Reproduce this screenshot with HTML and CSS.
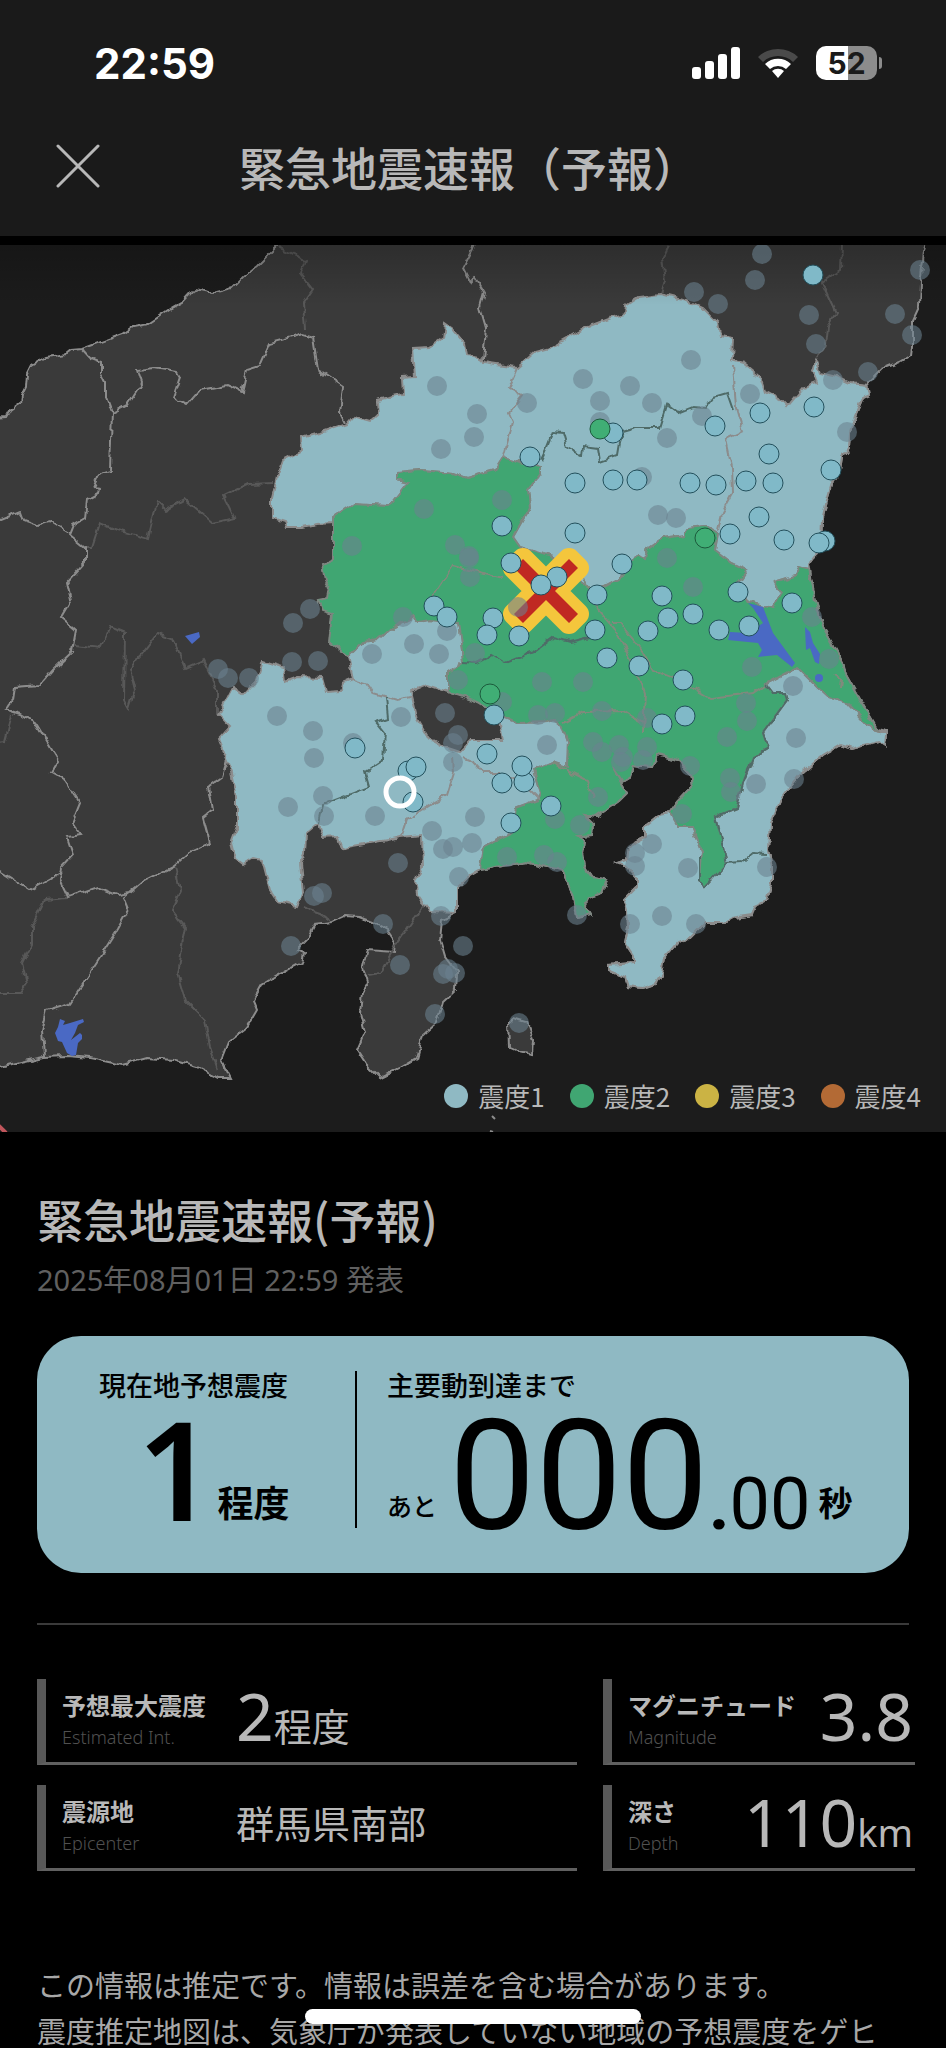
FILE: index.html
```html
<!DOCTYPE html>
<html lang="ja">
  <head>
    <meta charset="UTF-8" />
    <meta name="viewport" content="width=device-width, initial-scale=1" />
    <title>緊急地震速報（予報）</title>
    <link rel="stylesheet" href="styles.css">
  </head>

  <body>
    <div class="app">
      <div class="status-bar">
        <span class="time">22:59</span>
        <div class="status-icons">
          <svg class="signal" viewBox="0 0 48 32" aria-hidden="true">
            <rect x="0" y="20" width="9" height="12" rx="3" />
            <rect x="13" y="14" width="9" height="18" rx="3" />
            <rect x="26" y="7" width="9" height="25" rx="3" />
            <rect x="39" y="0" width="9" height="32" rx="3" />
          </svg>
          <svg class="wifi" viewBox="0 0 42 32" aria-hidden="true">
            <path class="wifi-off" d="M1 10A29 29 0 0 1 41 10L36 15A22 22 0 0 0 6 15Z" />
            <path d="M8 17A19 19 0 0 1 34 17L29 22A12 12 0 0 0 13 22Z" />
            <path d="M15 24A9 9 0 0 1 27 24L21 31Z" />
          </svg>
          <div class="battery"><span>52</span></div>
        </div>
      </div>

      <header class="header">
        <button class="close" aria-label="閉じる">
          <svg viewBox="0 0 44 44"><path d="M2 2L42 42M42 2L2 42" /></svg>
        </button>
        <h1>緊急地震速報（予報）</h1>
      </header>

      <div class="map">
        <svg class="map-svg" viewBox="0 245 946 887" role="img" aria-label="予想震度の地図">
          <defs>
            <!-- roughens the coast and the borders -->
            <filter id="rough" filterUnits="userSpaceOnUse" x="-20" y="225" width="986" height="927" color-interpolation-filters="sRGB">
              <feTurbulence type="fractalNoise" baseFrequency="0.12" numOctaves="1" seed="4" />
              <feDisplacementMap in="SourceGraphic" scale="8" xChannelSelector="R" yChannelSelector="G" />
            </filter>
            <linearGradient id="shade" x1="0" y1="0" x2="0" y2="1">
              <stop offset="0" stop-color="#000" stop-opacity=".22" />
              <stop offset="1" stop-color="#000" stop-opacity="0" />
            </linearGradient>
          </defs>

          <g filter="url(#rough)">
            <path class="land" d="M-10 418L6 417 10 410 21 402 22 395 26 387 27 374 31 366 46 357 66 354 71 350 82 349 123 334 133 327 148 324 160 316 172 308 183 302 195 289 213 293 232 288 243 277 258 265 278 245 285 235 926 235 925 245 920 283 919 307 913 320 913 347 912 355 900 362 880 370 868 382 870 395 863 398 855 417 850 433 849 448 842 457 840 470 832 483 827 500 823 517 822 550 815 555 809 563 812 583 815 602 823 627 832 643 843 663 845 673 860 700 878 730 887 732 886 747 878 742 852 749 840 745 823 755 800 775 780 800 770 823 768 850 772 867 772 883 767 900 755 905 752 915 732 918 723 923 705 923 688 940 677 943 665 957 662 973 655 984 643 988 628 986 625 977 608 970 608 965 633 963 633 955 625 943 628 927 627 910 624 900 637 887 637 878 627 867 617 863 626 860 628 847 645 838 645 827 660 815 670 813 678 802 692 787 690 773 678 760 657 755 652 767 633 765 630 777 622 782 612 767 627 793 617 803 597 817 585 815 593 823 592 835 578 836 585 840 583 853 585 867 593 877 607 880 602 893 587 898 585 905 591 915 577 917 573 897 567 880 562 870 547 867 527 862 507 865 480 870 468 877 457 888 457 913 442 920 440 940 445 957 457 973 456 990 443 1002 437 1023 423 1035 417 1058 400 1068 380 1078 367 1065 357 1050 365 1032 360 1013 362 993 368 983 363 967 367 950 395 952 396 943 387 930 373 922 360 917 345 916 332 922 315 924 307 940 297 950 304 953 302 962 277 975 262 984 253 1000 257 1010 247 1027 228 1042 221 1060 230 1078 218 1078 197 1067 173 1060 147 1058 122 1065 90 1058 67 1056 43 1057 -10 1069Z" />
            <path class="land" d="M508 1022L513 1018 527 1022 533 1040 532 1055 520 1052 509 1047Z" />
            <path class="faint" d="M278 247L305 260 300 273 313 290 304 303 306 330M85 548L92 548 100 523 117 530 148 539 157 502 165 510 185 499 213 523 234 518 223 496 248 484 273 483M75 645L100 648 110 627 125 633 124 700 129 709 135 690 130 670 158 633 172 638 185 668 203 660 217 690 217 715M175 867L180 890 172 910 185 927 177 973 185 1000 205 1020 210 1047 218 1070M68 898L45 900 32 927 32 943 22 963 27 983 20 993 0 993M302 907L320 913 330 920M425 903L397 943 380 973 368 975M669 245L662 260 665 280 661 294M842 245L841 270 822 283 836 313 827 327 825 347 816 360M12 715L5 742 -5 743" />
            <path class="border" d="M82 349L90 358 101 362 101 373 106 383 106 397 112 413 111 440 110 470 100 473 94 487 99 488 98 494 87 500 85 518 73 525 69 535 85 548 85 563 67 583 71 600 61 617 76 630 72 652 53 670 40 685 15 687 13 700 5 710 20 715 37 725 58 760 51 772 65 780 80 803 72 823 81 835 67 837 73 855 62 867 60 880 68 897 97 887 117 895 130 893 143 882 173 867 190 852 210 843 203 817 212 810 208 787 222 777 227 760M112 413L128 405 142 383 138 370 153 368 177 372 180 377 173 397 187 405 200 390 227 385 242 392 247 370 260 366 270 343 303 334 313 337 318 370 343 387 340 413 345 423M-5 522L20 512 23 520 37 525 50 521 69 533M-5 868L30 890 63 871M130 893L123 898 128 910 117 930 98 960 87 977 70 1003 47 1010 42 1030 44 1057M475 245L463 268 470 282 475 277 484 292 480 307 486 328 483 360" />

            <path class="level1" d="M445 324L452 329 465 345 467 355 480 357 483 363 517 368 535 352 550 348 568 338 587 327 613 317 625 314 626 305 638 297 660 294 687 301 703 308 718 323 720 335 733 337 732 360 743 363 760 377 765 392 780 400 787 407 803 388 817 383 812 370 815 360 820 373 837 377 850 383 868 385 870 395 863 398 855 417 850 433 849 448 842 457 840 470 832 483 827 500 823 517 822 550 815 555 809 563 809 570 798 567 795 576 775 582 782 593 773 608 760 605 748 602 738 583 747 570 732 563 715 550 718 533 705 526 688 528 685 535 663 538 648 548 645 558 637 555 622 577 603 587 590 590 553 557 520 547 513 537 530 507 528 490 541 473 541 467 520 463 503 458 495 470 467 478 453 473 420 470 397 472 397 480 408 483 393 502 387 506 353 504 333 517 333 523 317 524 303 527 287 527 285 522 272 518 272 497 277 477 283 460 303 450 302 438 320 433 347 424 353 417 370 422 378 415 377 400 403 394 402 377 415 376 413 348 430 347 443 338Z" />
            <path class="level1" d="M263 661L283 667 285 682 298 677 322 678 326 692 341 691 343 683 353 679 348 656 362 642 378 640 393 627 413 617 418 622 430 620 458 623 462 650 463 663 448 673 448 692 427 685 410 692 417 720 427 737 445 747 460 752 472 740 503 740 498 715 517 723 548 722 553 720 563 728 568 742 567 767 552 762 533 770 540 793 537 800 515 808 512 833 483 847 480 870 468 877 457 888 457 913 430 912 417 893 415 880 423 867 422 835 400 837 387 840 342 848 338 837 323 838 318 823 306 833 305 853 300 863 303 893 297 906 278 902 270 890 262 860 253 858 243 864 235 858 231 843 237 827 237 797 232 773 218 740 230 727 218 715 232 688 243 695 257 680Z" />
            <path class="level1" d="M797 667L817 687 828 697 847 703 867 725 878 732 887 732 886 747 878 742 852 749 840 745 823 755 800 775 780 800 770 823 768 850 772 867 772 883 767 900 755 905 752 915 732 918 723 923 705 923 688 940 677 943 665 957 662 973 655 984 643 988 628 986 625 977 608 970 608 965 633 963 633 955 625 943 628 927 627 910 624 900 637 887 637 878 627 867 617 863 626 860 628 847 645 838 645 827 660 815 670 813 678 827 692 827 702 852 700 880 705 887 727 863 715 817 737 808 743 783 753 757 768 748 763 733 787 700 785 693 772 693 765 684Z" />
            <path class="level2" d="M503 458L520 463 541 467 541 473 528 490 530 507 513 537 520 547 553 557 590 590 603 587 622 577 637 555 645 558 648 548 663 538 685 535 688 528 705 526 718 533 715 550 732 563 747 570 738 583 748 602 760 605 773 608 782 593 775 582 795 576 798 567 809 570 812 583 815 602 823 627 832 643 843 663 845 673 860 700 878 731 867 725 847 703 828 697 817 687 797 667 765 684 772 693 785 693 787 700 763 733 768 748 753 757 743 783 737 808 715 817 727 863 705 887 700 880 702 852 692 827 678 827 670 813 678 802 692 787 690 773 678 760 657 755 652 767 633 765 630 777 622 782 612 767 627 793 617 803 597 817 585 815 593 823 592 835 578 836 585 840 583 853 585 867 593 877 607 880 602 893 587 898 585 905 591 915 577 917 573 897 567 880 562 870 547 867 527 862 507 865 480 870 483 847 512 833 515 808 537 800 540 793 533 770 552 762 567 767 568 742 563 728 553 720 548 722 517 723 500 715 478 702 448 692 448 673 463 663 462 650 458 623 430 620 418 622 413 617 393 627 378 640 362 642 348 656 329 642 332 613 322 610 318 600 328 598 330 588 325 580 322 565 333 560 333 517 353 504 387 506 393 502 408 483 397 480 397 472 420 470 453 473 467 478 495 470Z" />

            <path class="border" d="M517 368L509 387 522 395 509 413 513 422 503 458M733 365L736 407 743 431 726 439 732 467 733 493 722 513 718 530M353 680L368 685 373 693 397 700 410 697M453 757L454 773 447 795 433 803 407 820 402 835M463 758L473 762 483 773 500 773 527 787 540 800" />
            <path class="inner" d="M541 460L547 447 553 432 563 433 567 447 582 455 583 447 598 449 600 461 617 455 619 443 623 432 637 428 660 428 667 405 678 413 693 407 705 408 713 397 727 393 733 410M386 697L388 718 376 722 385 733 383 760 365 772 369 787 343 797 322 805 318 823M463 663L475 664 492 655 505 663 533 652 553 637 570 642 590 637M700 856L700 880 705 887 727 863 742 862 753 853 766 854M727 863L715 817 737 808 743 783 753 757 768 748 763 733 787 700 785 693 772 693 765 684" />
            <path class="pref" d="M433 597L453 566 503 579M583 577L598 610 613 627 637 670 645 693 643 733M613 623L620 623 643 652 653 670 683 682 710 698 753 693 765 685M563 723L583 712 623 711 643 723M552 763L587 780 593 797M834 674L842 680 841 688" />
          </g>

          <g class="lake">
            <path d="M185 636L199 632 200 637 192 644Z" />
            <path d="M60 1019L65 1021 63 1025 70 1023 83 1019 84 1022 78 1025 75 1033 71 1040 80 1033 82 1035 82 1039 78 1043 76 1055 72 1056 67 1053 62 1042 58 1041 55 1033 58 1027Z" />
            <path d="M748 603L763 607 773 633 795 663 792 667 777 655 758 657 762 650 758 643 728 640 730 632 748 633 763 623 753 608Z" />
            <path d="M805 627L810 632 813 643 820 654 819 664 815 662 810 648 806 650Z" />
            <circle cx="819" cy="678" r="4" />
          </g>

          <rect x="0" y="245" width="946" height="60" fill="url(#shade)" />
          <path class="epicenter" d="M546 582L569 559 578 568 555 591 578 614 569 623 546 600 523 623 514 614 537 591 514 568 523 559Z" />
          <g id="stations"></g>
          <circle class="here" cx="400" cy="792" r="14" />
          <path class="edge-line" d="M-2 1125L6 1133" />
          <path class="islet" d="M492 1116L495 1119M490 1131L493 1132" />
        </svg>

        <ul class="legend">
          <li><span class="dot dot1"></span>震度1</li>
          <li><span class="dot dot2"></span>震度2</li>
          <li><span class="dot dot3"></span>震度3</li>
          <li><span class="dot dot4"></span>震度4</li>
        </ul>
      </div>

      <main class="info">
        <h2>緊急地震速報(予報)</h2>
        <p class="issued">2025年08月01日 22:59 発表</p>

        <section class="card">
          <div class="card-intensity">
            <h3>現在地予想震度</h3>
            <p class="intensity"><span class="num">1</span><span class="unit">程度</span></p>
          </div>
          <div class="card-arrival">
            <h3>主要動到達まで</h3>
            <p class="countdown">
              <span class="ato">あと</span>
              <span class="digits">000<span class="point">.</span><span class="frac">00</span></span>
              <span class="sec">秒</span>
            </p>
          </div>
        </section>

        <hr class="rule">

        <dl class="details">
          <div class="item">
            <dt>予想最大震度<small>Estimated Int.</small></dt>
            <dd><span class="big">2</span>程度</dd>
          </div>
          <div class="item item-right">
            <dt>マグニチュード<small>Magnitude</small></dt>
            <dd><span class="big">3.8</span></dd>
          </div>
          <div class="item">
            <dt>震源地<small>Epicenter</small></dt>
            <dd class="place">群馬県南部</dd>
          </div>
          <div class="item item-right">
            <dt>深さ<small>Depth</small></dt>
            <dd><span class="big">110</span>km</dd>
          </div>
        </dl>

        <div class="notes">
          <p>この情報は推定です。情報は誤差を含む場合があります。</p>
          <p>震度推定地図は、気象庁が発表していない地域の予想震度をゲヒ</p>
        </div>
      </main>

      <div class="home-indicator"></div>
    </div>

    <script src="map.js"></script>
  </body>
</html>
```
FILE: styles.css
```css
* {
  box-sizing: border-box;
}

body {
  margin: 0;
  background-color: #000;
  color: #b8b8b8;
  font-family: "Noto Sans", "Noto Sans CJK JP", sans-serif;
}

h1,
h2,
h3,
p,
dl,
dd,
ul {
  margin: 0;
  padding: 0;
}

.app {
  height: 100vh;
  overflow: hidden;
}

.status-bar {
  display: flex;
  justify-content: space-between;
  align-items: center;
  height: 126px;
  padding: 0 64px 0 94px;
  background-color: #1a1a1a;
  color: #fff;
}

.time {
  font-family: Inter, sans-serif;
  font-size: 42px;
  font-weight: 700;
}

.status-icons {
  display: flex;
  align-items: center;
  gap: 17px;
}

.signal {
  width: 48px;
  height: 32px;
  fill: #fff;
}

.wifi {
  width: 42px;
  height: 32px;
  fill: #fff;
}

.wifi-off {
  fill: #4a4a4a;
}

.battery {
  position: relative;
  width: 61px;
  height: 34px;
  margin-right: 5px;
  border-radius: 10px;
  background: linear-gradient(to right, #fff 52%, #8c8c8c 52%);
  color: #1a1a1a;
  font-family: Inter, sans-serif;
  font-size: 30px;
  font-weight: 700;
  line-height: 34px;
  text-align: center;
}

.battery::after {
  content: "";
  position: absolute;
  top: 11px;
  right: -5px;
  width: 3px;
  height: 12px;
  border-radius: 0 3px 3px 0;
  background-color: #8c8c8c;
}

.header {
  display: grid;
  grid-template-columns: 44px 1fr 52px;
  align-items: center;
  height: 119px;
  padding: 0 56px 30px;
  border-bottom: 9px solid #000;
  background-color: #1a1a1a;
}

.close {
  width: 44px;
  height: 44px;
  padding: 0;
  border: none;
  background: none;
  cursor: pointer;
}

.close svg {
  display: block;
  fill: none;
  stroke: #b8b8b8;
  stroke-width: 3;
  stroke-linecap: round;
}

h1 {
  font-family: "Noto Sans CJK JP", sans-serif;
  font-size: 46px;
  font-weight: 500;
  line-height: 60px;
  text-align: center;
  white-space: nowrap;
}

/* map */
.map {
  position: relative;
  background-color: #1c1c1c;
}

.map-svg {
  display: block;
  width: 100%;
}

.land {
  fill: #3a3a3a;
  stroke: #8c8c8c;
  stroke-width: 2;
}

.level1 {
  fill: #8fb9c3;
  stroke: #8c8c8c;
  stroke-width: 2;
}

.level2 {
  fill: #40a672;
  stroke: #7d8680;
  stroke-width: 2;
}

.faint,
.border,
.inner,
.pref {
  fill: none;
  stroke-width: 2;
}

.faint {
  stroke: #585858;
}

.border {
  stroke: #8c8c8c;
}

.inner {
  stroke: #4f6b68;
}

.pref {
  stroke: #808a7c;
}

.lake {
  fill: #4a69c4;
}

.epicenter {
  fill: #c02822;
  stroke: #f4c63c;
  stroke-width: 22;
  stroke-linejoin: round;
  paint-order: stroke;
}

.station-off {
  fill: #6b828f;
  fill-opacity: .58;
}

.station-1 {
  fill: #80b9c8;
  stroke: #23505c;
}

.station-2 {
  fill: #40ae75;
  stroke: #1c5a3c;
}

.here {
  fill: none;
  stroke: #fff;
  stroke-width: 5;
}

.edge-line {
  stroke: #c0565c;
  stroke-width: 4;
}

.islet {
  stroke: #8c8c8c;
  stroke-width: 2;
}

.legend {
  position: absolute;
  right: 25px;
  bottom: 19px;
  display: flex;
  gap: 25px;
  list-style: none;
  font-family: "Noto Sans CJK JP", sans-serif;
  font-size: 26px;
  line-height: 34px;
}

.legend li {
  display: flex;
  align-items: center;
  gap: 10px;
}

.dot {
  width: 24px;
  height: 24px;
  border-radius: 50%;
}

.dot1 {
  background-color: #8fb9c3;
}

.dot2 {
  background-color: #40a672;
}

.dot3 {
  background-color: #cbb344;
}

.dot4 {
  background-color: #b36a35;
}

/* information */
.info {
  padding: 51px 31px 0 37px;
}

h2 {
  font-family: "Noto Sans CJK JP", sans-serif;
  font-size: 46px;
  font-weight: 500;
  line-height: 70px;
}

.issued {
  margin-top: 10px;
  color: #606060;
  font-size: 29px;
  font-weight: 400;
  line-height: 34px;
}

.card {
  display: flex;
  height: 237px;
  margin: 39px 6px 0 0;
  padding: 35px 0 45px;
  border-radius: 44px;
  background-color: #8fb9c3;
  color: #000;
}

.card h3 {
  font-family: "Noto Sans CJK JP", sans-serif;
  font-size: 27px;
  font-weight: 500;
  line-height: 27px;
  white-space: nowrap;
}

.card-intensity {
  flex: 0 0 320px;
  padding-left: 62px;
  border-right: 2px solid #000;
}

.intensity,
.countdown {
  display: flex;
  align-items: flex-end;
}

.intensity {
  margin-top: 14px;
  padding-left: 38px;
}

.num {
  font-size: 137px;
  font-weight: 600;
  line-height: 112px;
}

.unit {
  margin-left: 2px;
  font-size: 36px;
  font-weight: 700;
  line-height: 40px;
}

.card-arrival {
  flex: 1;
  padding-left: 30px;
}

.countdown {
  margin-top: 22px;
}

.ato {
  font-size: 25px;
  font-weight: 500;
  line-height: 58px;
}

.digits {
  display: flex;
  align-items: baseline;
  margin-left: 12px;
  font-family: Roboto, sans-serif;
  font-size: 154px;
  font-weight: 400;
  line-height: 114px;
}

.point,
.frac {
  font-size: 72px;
  line-height: 60px;
}

.point {
  font-weight: 700;
}

.sec {
  margin-left: 8px;
  font-size: 34px;
  font-weight: 700;
  line-height: 64px;
}

.rule {
  height: 2px;
  margin: 50px 6px 0 0;
  border: none;
  background-color: #3a3a3a;
}

.details {
  display: grid;
  grid-template-columns: 540fr 312fr;
  gap: 20px 26px;
  margin-top: 54px;
}

.item {
  display: grid;
  grid-template-columns: 174px 1fr;
  align-items: center;
  height: 86px;
  padding-left: 16px;
  border-left: 9px solid #585858;
  border-bottom: 3px solid #606060;
}

.item-right {
  display: flex;
  justify-content: space-between;
  padding-right: 2px;
}

.item dt {
  font-family: "Noto Sans CJK JP", sans-serif;
  font-size: 24px;
  font-weight: 700;
  line-height: 33px;
  white-space: nowrap;
}

.item small {
  display: block;
  color: #505050;
  font-family: "Noto Sans", sans-serif;
  font-size: 18px;
  font-weight: 300;
}

.item dd {
  font-size: 38px;
  line-height: 72px;
  white-space: nowrap;
}

.item .place {
  padding-bottom: 8px;
}

.item .big {
  font-size: 66px;
}

.notes {
  margin-top: 90px;
  color: #a8a8a8;
  font-family: "Noto Sans CJK JP", sans-serif;
  font-size: 29px;
  line-height: 46px;
  white-space: nowrap;
}

.home-indicator {
  position: fixed;
  bottom: 24px;
  left: 50%;
  width: 336px;
  height: 15px;
  margin-left: -168px;
  border-radius: 8px;
  background-color: #fff;
}
```
FILE: map.js
```js
// station positions on the map: [x, y]
const off = [
  [437, 386], [477, 414], [474, 437], [441, 449], [424, 509], [352, 546], [455, 545], [469, 556], [469, 558], [470, 577],
  [310, 609], [293, 623], [403, 617], [447, 631], [414, 644], [372, 654], [439, 654], [218, 669], [228, 678], [249, 678],
  [292, 662], [318, 661], [475, 653], [458, 680], [762, 254], [755, 280], [694, 292], [718, 304], [809, 315], [920, 270],
  [895, 314], [912, 335], [816, 344], [868, 372], [833, 380], [691, 360], [583, 379], [630, 386], [600, 401], [652, 403],
  [527, 403], [750, 394], [702, 416], [600, 422], [667, 438], [847, 432], [642, 477], [658, 515], [676, 518], [502, 500],
  [667, 558], [693, 587], [812, 617], [829, 659], [752, 667], [793, 686], [542, 682], [583, 682], [518, 607], [277, 716],
  [313, 731], [314, 758], [353, 743], [401, 717], [445, 713], [458, 735], [453, 743], [453, 762], [323, 796], [288, 807],
  [324, 816], [375, 816], [432, 831], [475, 817], [453, 847], [443, 849], [472, 843], [398, 863], [459, 877], [322, 893],
  [314, 896], [441, 916], [383, 924], [291, 946], [463, 946], [400, 965], [448, 969], [443, 974], [455, 973], [435, 1014],
  [547, 745], [602, 711], [555, 713], [538, 715], [502, 702], [647, 718], [746, 703], [747, 721], [727, 737], [796, 738],
  [794, 779], [756, 784], [730, 778], [731, 792], [690, 766], [682, 814], [593, 742], [602, 752], [619, 745], [623, 757],
  [621, 762], [647, 747], [643, 760], [598, 797], [555, 819], [580, 825], [507, 857], [544, 855], [557, 862], [652, 844],
  [635, 853], [635, 866], [688, 868], [767, 867], [577, 915], [630, 924], [662, 916], [696, 924], [519, 1023],
];

const level1 = [
  [813, 275], [814, 407], [760, 413], [715, 426], [613, 433], [769, 454], [530, 457], [831, 470], [575, 483], [613, 480],
  [637, 480], [690, 483], [716, 485], [746, 481], [773, 483], [759, 517], [502, 526], [575, 533], [730, 534], [784, 540],
  [825, 541], [819, 543], [511, 563], [622, 564], [557, 577], [541, 585], [597, 595], [662, 596], [738, 592], [792, 603],
  [668, 618], [693, 614], [648, 631], [719, 630], [749, 626], [595, 630], [493, 618], [487, 635], [519, 636], [607, 658],
  [639, 666], [683, 680], [434, 606], [447, 617], [494, 715], [662, 724], [685, 716], [487, 754], [524, 782], [522, 766],
  [502, 783], [551, 806], [511, 823], [355, 748], [408, 771], [416, 767], [413, 802],
];

const level2 = [[600, 429], [705, 538], [490, 694]];

function drawStations(points, className) {
  const group = document.getElementById("stations");
  points.forEach(([x, y]) => {
    const circle = document.createElementNS("http://www.w3.org/2000/svg", "circle");
    circle.setAttribute("cx", x);
    circle.setAttribute("cy", y);
    circle.setAttribute("r", 10);
    circle.setAttribute("class", className);
    group.appendChild(circle);
  });
}

drawStations(off, "station-off");
drawStations(level1, "station-1");
drawStations(level2, "station-2");
```
